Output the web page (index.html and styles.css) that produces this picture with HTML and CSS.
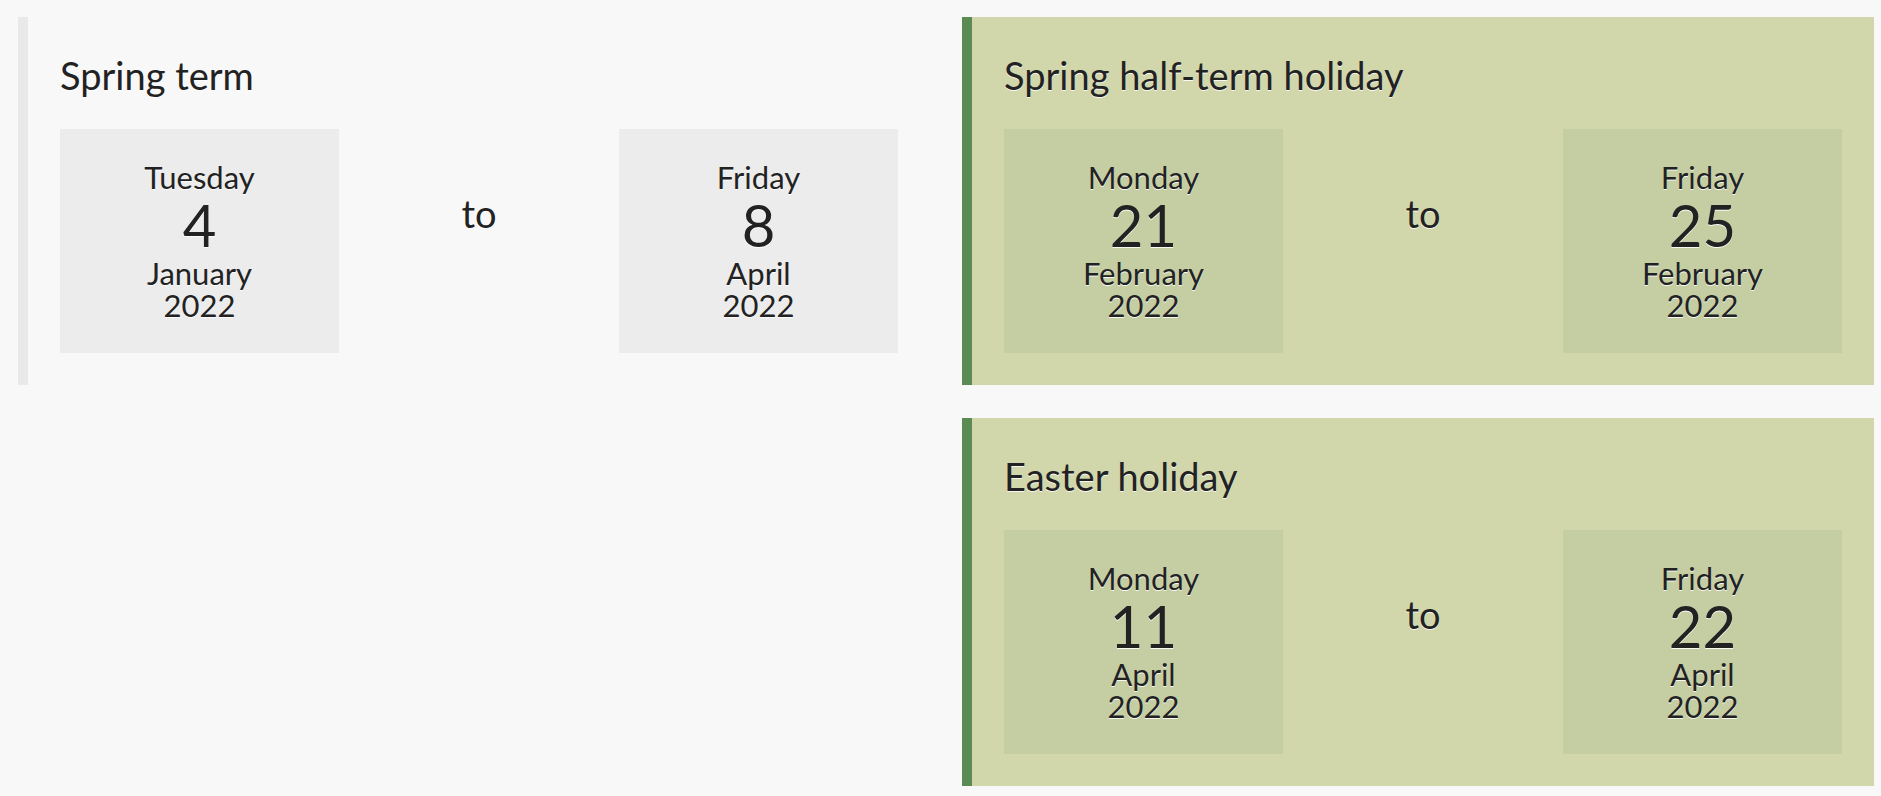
FILE: index.html
```html
<!DOCTYPE html>
<html lang="en">
<head>
<meta charset="utf-8">
<title>Term dates</title>
<link rel="stylesheet" href="styles.css">
</head>
<body>
<div class="terms">
  <section class="card">
    <h2 class="card-title">Spring term</h2>
    <div class="range">
      <div class="date"><span class="line">Tuesday</span><span class="num">4</span><span class="line">January</span><span class="line">2022</span></div>
      <div class="to">to</div>
      <div class="date"><span class="line">Friday</span><span class="num">8</span><span class="line">April</span><span class="line">2022</span></div>
    </div>
  </section>
  <section class="card holiday">
    <h2 class="card-title">Spring half-term holiday</h2>
    <div class="range">
      <div class="date"><span class="line">Monday</span><span class="num">21</span><span class="line">February</span><span class="line">2022</span></div>
      <div class="to">to</div>
      <div class="date"><span class="line">Friday</span><span class="num">25</span><span class="line">February</span><span class="line">2022</span></div>
    </div>
  </section>
  <div class="empty"></div>
  <section class="card holiday">
    <h2 class="card-title">Easter holiday</h2>
    <div class="range">
      <div class="date"><span class="line">Monday</span><span class="num">11</span><span class="line">April</span><span class="line">2022</span></div>
      <div class="to">to</div>
      <div class="date"><span class="line">Friday</span><span class="num">22</span><span class="line">April</span><span class="line">2022</span></div>
    </div>
  </section>
</div>
</body>
</html>
```
FILE: styles.css
```css
html, body {
  margin: 0;
  padding: 0;
  background: #f8f8f8;
}
body {
  font-family: "Lato", "Liberation Sans", sans-serif;
  color: #222;
  text-shadow: 0 1px 0 rgba(255, 255, 255, 0.85);
}
.terms {
  display: grid;
  grid-template-columns: 912px 912px;
  column-gap: 32px;
  row-gap: 33px;
  padding: 17px 0 0 18px;
}
.card {
  border-left: 10px solid #e9e9e9;
  padding: 32px;
  background: #f8f8f8;
}
.card.holiday {
  border-left-color: #5b8a52;
  background: #d1d7ab;
}
.card-title {
  margin: 0 0 28px 0;
  font-size: 38px;
  line-height: 52px;
  font-weight: 400;
}
.range {
  display: grid;
  grid-template-columns: 279px 1fr 279px;
  align-items: start;
}
.date {
  display: flex;
  flex-direction: column;
  align-items: center;
  padding: 32px 0;
  background: #ececec;
  font-size: 31px;
  line-height: 32px;
}
.holiday .date {
  background: #c5cea2;
}
.date .num {
  font-size: 58px;
  line-height: 64px;
}
.to {
  padding-top: 58px;
  text-align: center;
  font-size: 38px;
  line-height: 52px;
}
```
